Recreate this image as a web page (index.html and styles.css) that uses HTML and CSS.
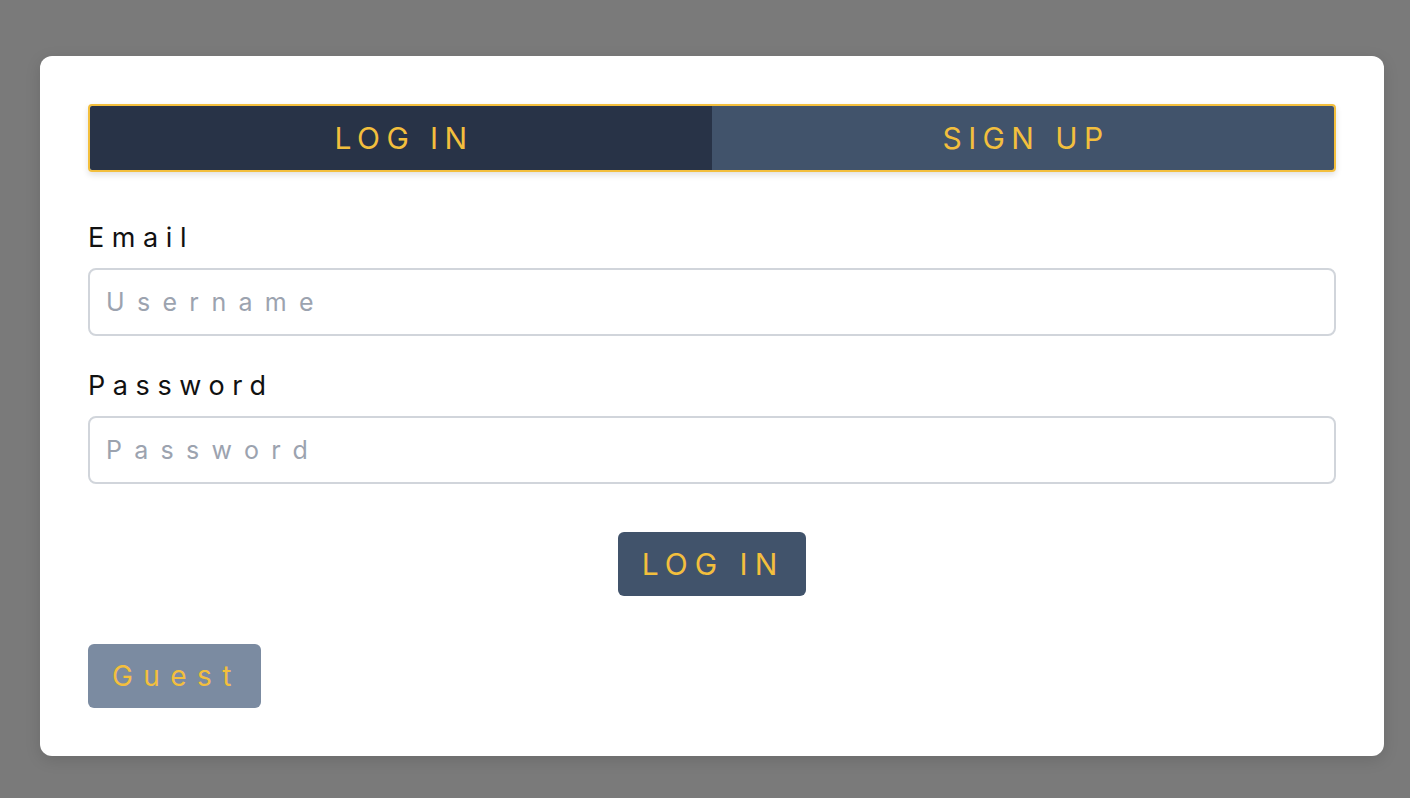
FILE: index.html
```html
<!DOCTYPE html>
<html lang="en">
<head>
<meta charset="utf-8">
<title>Log in</title>
<link rel="stylesheet" href="styles.css">
</head>
<body>
<main class="card">
  <div class="tabs">
    <button class="tab tab-active">LOG IN</button>
    <button class="tab">SIGN UP</button>
  </div>
  <form class="form">
    <div class="field">
      <label class="label" for="email">Email</label>
      <input class="input" id="email" type="text" placeholder="Username">
    </div>
    <div class="field">
      <label class="label" for="password">Password</label>
      <input class="input" id="password" type="password" placeholder="Password">
    </div>
    <div class="submit-row">
      <button type="button" class="btn btn-primary">LOG IN</button>
    </div>
    <div class="guest-row">
      <button type="button" class="btn btn-guest">Guest</button>
    </div>
  </form>
</main>
</body>
</html>
```
FILE: styles.css
```css
* { box-sizing: border-box; }
html, body { margin: 0; padding: 0; }
body {
  background: #7a7a7a;
  font-family: "Inter", "Liberation Sans", sans-serif;
  height: 798px;
  padding: 56px 26px 0 40px;
}
.card {
  background: #ffffff;
  border-radius: 12px;
  padding: 48px;
  width: 1344px;
  box-shadow: 0 4px 16px rgba(0,0,0,0.12);
}
.tabs {
  display: flex;
  border: 2px solid #f3bf3d;
  border-radius: 4px;
  overflow: hidden;
  height: 68px;
  box-shadow: 0 3px 6px rgba(0,0,0,0.12);
}
.tab {
  flex: 1;
  border: none;
  background: #41536b;
  color: #f3bf3d;
  font-family: inherit;
  font-size: 30px;
  font-weight: 400;
  letter-spacing: 6.4px;
  padding: 0 0 0 6px;
}
.tab-active { background: #283347; }
.form { display: flex; flex-direction: column; }
.field { display: flex; flex-direction: column; margin-top: 48px; }
.field + .field { margin-top: 32px; }
.label {
  font-size: 27px;
  line-height: 36px;
  letter-spacing: 7.6px;
  color: #111111;
  margin-bottom: 12px;
}
.input {
  height: 68px;
  border: 2px solid #d1d5db;
  border-radius: 8px;
  padding: 0 16px;
  font-family: inherit;
  font-size: 25px;
  letter-spacing: 12.3px;
  color: #111;
}
.input::placeholder { color: #9ca3af; }
.submit-row { display: flex; justify-content: center; margin-top: 48px; }
.guest-row { display: flex; margin-top: 48px; }
.btn {
  height: 64px;
  border: none;
  border-radius: 6px;
  color: #f3bf3d;
  font-family: inherit;
}
.btn-primary {
  background: #41536b;
  font-size: 30px;
  letter-spacing: 7px;
  padding: 0 22px 0 24px;
}
.btn-guest {
  background: #7b8ba1;
  font-size: 28px;
  letter-spacing: 10.4px;
  padding: 0 19px 0 24px;
}
```
